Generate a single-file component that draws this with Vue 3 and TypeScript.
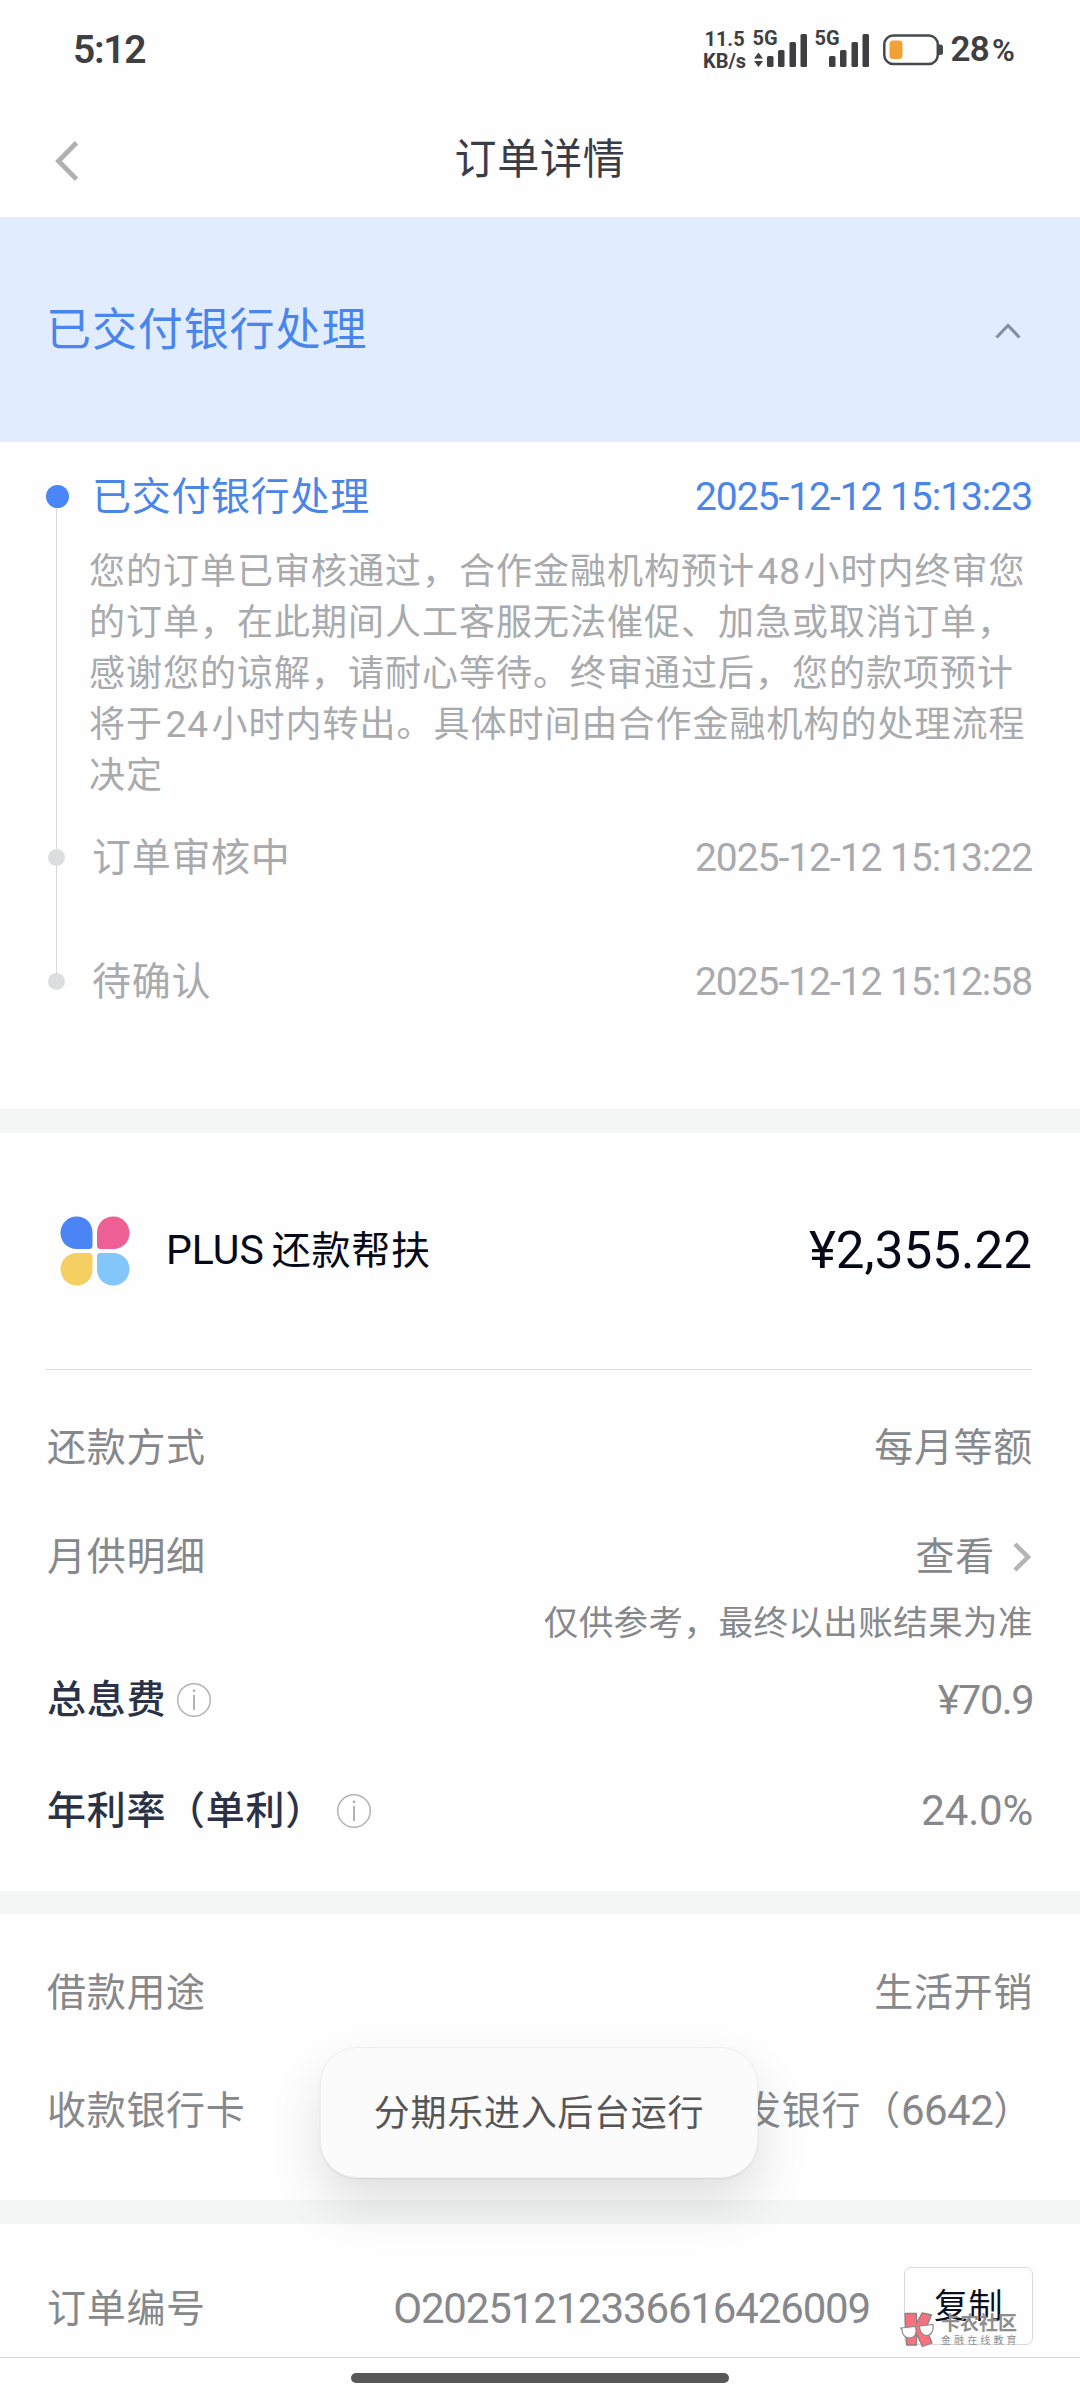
<script setup lang="ts">
interface Step {
  title: string
  time: string
  active?: boolean
  lines?: string[]
}

const steps: Step[] = [
  {
    title: '已交付银行处理',
    time: '2025-12-12 15:13:23',
    active: true,
    lines: [
      '您的订单已审核通过，合作金融机构预计48小时内终审您',
      '的订单，在此期间人工客服无法催促、加急或取消订单，',
      '感谢您的谅解，请耐心等待。终审通过后，您的款项预计',
      '将于24小时内转出。具体时间由合作金融机构的处理流程',
      '决定',
    ],
  },
  { title: '订单审核中', time: '2025-12-12 15:13:22' },
  { title: '待确认', time: '2025-12-12 15:12:58' },
]

// Digits inside running text get a little air on both sides.
const segments = (line: string): string[] => line.split(/(\d+)/).filter(Boolean)
const isDigits = (part: string): boolean => /^\d+$/.test(part)
</script>

<template>
  <div class="page">
    <header class="status">
      <span class="clock">5:12</span>
      <div class="indicators">
        <div class="speed"><span>11.5</span><span>KB/s</span></div>
        <div class="signal first">
          <span class="net">5G</span>
          <svg width="54" height="34" viewBox="0 0 54 34" fill="#3f3f41">
            <path d="M4.500 19.500l4.500 6H0zM4.500 34l4.500-6H0z" />
            <rect x="13" y="23" width="6.500" height="11" rx="1.500" />
            <rect x="24" y="17" width="6.500" height="17" rx="1.500" />
            <rect x="35.500" y="9" width="6.500" height="25" rx="1.500" />
            <rect x="46.500" y="1" width="6.500" height="33" rx="1.500" />
          </svg>
        </div>
        <div class="signal second">
          <span class="net">5G</span>
          <svg width="54" height="34" viewBox="0 0 54 34" fill="#3f3f41">
            <rect x="13" y="23" width="6.500" height="11" rx="1.500" />
            <rect x="24" y="17" width="6.500" height="17" rx="1.500" />
            <rect x="35.500" y="9" width="6.500" height="25" rx="1.500" />
            <rect x="46.500" y="1" width="6.500" height="33" rx="1.500" />
          </svg>
        </div>
        <svg class="battery" width="61" height="32" viewBox="0 0 61 32">
          <rect x="1.300" y="1.500" width="53.500" height="28.500" rx="9" fill="none" stroke="#45494d" stroke-width="2.500" />
          <path d="M56 10.500h1.500a2.500 2.500 0 0 1 2.500 2.500v5.500a2.500 2.500 0 0 1-2.500 2.500H56z" fill="#45494d" />
          <rect x="6.500" y="6.500" width="13" height="18.500" rx="3.500" fill="#f0a236" />
        </svg>
        <span class="level">28<small>%</small></span>
      </div>
    </header>

    <nav class="nav">
      <svg class="back" width="24" height="40" viewBox="0 0 24 40">
        <path d="M21.500 1.800L3.500 20l18 18.200" fill="none" stroke="#b0b0b0" stroke-width="4.800" />
      </svg>
      <h1>订单详情</h1>
    </nav>

    <section class="banner">
      <h2>已交付银行处理</h2>
      <svg width="26" height="16" viewBox="0 0 26 16">
        <path d="M1.500 14.500L13 2.500l11.500 12" fill="none" stroke="#8290a5" stroke-width="3.200" />
      </svg>
    </section>

    <ol class="timeline">
      <li v-for="step in steps" :key="step.time" :class="{ active: step.active }">
        <i class="dot"></i>
        <div class="content">
          <div class="head">
            <span class="name">{{ step.title }}</span>
            <time>{{ step.time }}</time>
          </div>
          <p v-if="step.lines" class="desc">
            <span v-for="line in step.lines" :key="line" class="line"><span
              v-for="part in segments(line)"
              :key="part"
              :class="{ digits: isDigits(part) }"
            >{{ part }}</span></span>
          </p>
        </div>
      </li>
    </ol>

    <section class="card">
      <div class="product">
        <svg width="70" height="70" viewBox="0 0 70 70">
          <path d="M16.500 0.500C26 0.500 32.500 7 32.500 17v12.500a3.500 3.500 0 0 1-3.500 3.500H17C7.500 33 .5 26 .5 17S7.500.5 16.500.5z" fill="#4b84f5" />
          <path d="M53.500 .5C44 .5 37 7 37 17v12.500a3.500 3.500 0 0 0 3.500 3.500H53C62.500 33 69.500 26 69.500 17S62.500.5 53.500.5z" fill="#ee5f96" />
          <path d="M16.500 69.500C26 69.500 32.500 63 32.500 53V40.500a3.500 3.500 0 0 0-3.500-3.500H17C7.500 37 .5 44 .5 53s7 16.500 16 16.500z" fill="#f6cf63" />
          <path d="M53.500 69.500C44 69.500 37 63 37 53V40.500a3.500 3.500 0 0 1 3.500-3.500H53c9.500 0 16.500 7 16.500 16s-7 16.500-16 16.500z" fill="#82c6fa" />
        </svg>
        <span class="product-name"><span class="latin">PLUS</span>还款帮扶</span>
        <strong>¥2,355.22</strong>
      </div>
      <div class="rows">
        <div class="row r-method"><span>还款方式</span><span>每月等额</span></div>
        <div class="row r-monthly">
          <span>月供明细</span>
          <span class="link">查看
            <svg width="18" height="30" viewBox="0 0 18 30">
              <path d="M2 2l13 13L2 28" fill="none" stroke="#b4b4b6" stroke-width="4.500" />
            </svg>
          </span>
        </div>
        <p class="note">仅供参考，最终以出账结果为准</p>
        <div class="row r-fee">
          <span class="key">总息费
            <svg class="info" width="36" height="36" viewBox="0 0 36 36">
              <circle cx="18" cy="18" r="16.300" fill="none" stroke="#b2b2b4" stroke-width="1.500" />
              <circle cx="18" cy="8.800" r="1.400" fill="#b2b2b4" />
              <path d="M18 13v15" stroke="#b2b2b4" stroke-width="2" />
            </svg>
          </span>
          <span class="num fee">¥70.9</span>
        </div>
        <div class="row r-rate">
          <span class="key rate">年利率（单利）
            <svg class="info" width="36" height="36" viewBox="0 0 36 36">
              <circle cx="18" cy="18" r="16.300" fill="none" stroke="#b2b2b4" stroke-width="1.500" />
              <circle cx="18" cy="8.800" r="1.400" fill="#b2b2b4" />
              <path d="M18 13v15" stroke="#b2b2b4" stroke-width="2" />
            </svg>
          </span>
          <span class="num percent">24.0%</span>
        </div>
      </div>
    </section>

    <section class="usage">
      <div class="row"><span>借款用途</span><span>生活开销</span></div>
      <div class="row"><span>收款银行卡</span><span class="bank">广发银行（<span class="num">6642</span>）</span></div>
    </section>

    <section class="order">
      <span class="label">订单编号</span>
      <span class="order-no">O20251212336616426009</span>
      <button type="button">复制</button>
    </section>

    <footer class="gesture"><i></i></footer>

    <div class="toast">分期乐进入后台运行</div>

    <div class="watermark">
      <svg width="35" height="36" viewBox="0 0 35 36">
        <path d="M5 1.500h11.500v10L22 1l9.500 2-5.500 13 6 15-9.500 3.500-6-12.500v11H6.500z" fill="#f7727f" stroke="#8d7f80" stroke-width="1.300" stroke-linejoin="round" />
        <path d="M1 16l14.500-1.500c2 8-1.500 11.500-6 11.500C4.500 26 2 22 2 17.500L.5 16zM19.500 14L33 12.500c.8 7-2 11-6.500 11-4 0-7-4-7-9.500zM15.500 16q2-2 4-.5" fill="#fff" stroke="#8c8c8c" stroke-width="1.200" />
      </svg>
      <div class="mark-text"><b>卡农社区</b><span>金融在线教育</span></div>
    </div>
  </div>
</template>

<style>
body {
  margin: 0;
  background: #fefefe;
}
</style>

<style scoped>
.page {
  position: relative;
  width: 1080px;
  height: 2400px;
  overflow: hidden;
  background: #fefefe;
  color: #87888b;
  font-family: Roboto, "Noto Sans CJK SC", sans-serif;
  font-size: 39px;
  line-height: 1.2;
  letter-spacing: 0.7px;
  white-space: nowrap;
}
h1, h2, p, ol {
  margin: 0;
  padding: 0;
  font-weight: 400;
}
svg {
  display: block;
  flex: none;
}

.status {
  height: 103px;
  box-sizing: border-box;
  padding: 0 66px 3px 73px;
  display: flex;
  align-items: center;
  justify-content: space-between;
  color: #3f3f41;
  letter-spacing: 0;
}
.clock {
  font-size: 39px;
  font-weight: 600;
  letter-spacing: -1.3px;
}
.indicators {
  display: flex;
  align-items: center;
}
.speed {
  display: flex;
  flex-direction: column;
  align-items: center;
  font-size: 20px;
  line-height: 22px;
  font-weight: 700;
  width: 44px;
  margin-right: 7px;
}
.signal {
  position: relative;
  width: 54px;
}
.signal.second {
  margin-left: 8px;
}
.net {
  position: absolute;
  left: -1px;
  top: -5px;
  font-size: 20px;
  line-height: 20px;
  font-weight: 700;
}
.battery {
  margin-left: 13px;
}
.level {
  margin-left: 7px;
  font-size: 35px;
  font-weight: 600;
  letter-spacing: -0.8px;
}
.level small {
  font-size: 31px;
  margin-left: 3px;
}

.nav {
  height: 114px;
  display: flex;
  align-items: center;
  justify-content: center;
  position: relative;
}
.back {
  position: absolute;
  left: 55px;
  top: 38px;
}
h1 {
  font-size: 42px;
  letter-spacing: 0.8px;
  color: #3a3d46;
}

.banner {
  height: 225px;
  box-sizing: border-box;
  padding: 3px 59px 0 46px;
  display: flex;
  align-items: center;
  justify-content: space-between;
  background: #e1edfe;
}
h2 {
  font-size: 45px;
  letter-spacing: 0.9px;
  color: #4a85ee;
}

.timeline {
  list-style: none;
  height: 639px;
  padding: 28px 48px 0 46px;
  border-bottom: 24px solid #f4f6f6;
}
.timeline li {
  position: relative;
  display: flex;
  margin-bottom: 70px;
}
.timeline li.active {
  margin-bottom: 29px;
}
.timeline li:not(:last-child)::before {
  content: "";
  position: absolute;
  left: 10px;
  top: 27px;
  bottom: -100px;
  width: 1px;
  background: #d9dadc;
}
.timeline li.active::before {
  bottom: -50px;
}
.dot {
  position: relative;
  flex: none;
  width: 17px;
  height: 17px;
  margin: 18px 27px 0 2px;
  border-radius: 50%;
  background: #dcdde0;
}
.active .dot {
  width: 23px;
  height: 23px;
  margin: 15px 23px 0 0;
  background: #4b86f8;
}
.content {
  flex: 1;
  color: #a9aaad;
}
.head {
  height: 54px;
  display: flex;
  align-items: center;
  justify-content: space-between;
}
.active .head {
  color: #4a85ea;
}
time {
  letter-spacing: -1.05px;
}
.desc {
  margin: 23px 0 0 -3px;
  font-size: 36px;
  letter-spacing: 1px;
  line-height: 51px;
}
.line {
  display: block;
}
.digits {
  font-size: 37px;
  line-height: 1;
  margin: 0 2.500px;
}

.card {
  border-bottom: 23px solid #f4f6f6;
}
.product {
  height: 236px;
  margin: 0 48px 0 46px;
  padding-left: 14px;
  border-bottom: 1px solid #dadbdc;
  display: flex;
  align-items: center;
  color: #060a18;
}
.product-name {
  margin-left: 36px;
}
.product-name .latin {
  font-size: 41px;
  margin-right: 8px;
  letter-spacing: 0;
}
.product strong {
  margin-left: auto;
  font-size: 51.200px;
  font-weight: 400;
  letter-spacing: 0;
}
.rows {
  height: 521px;
  padding: 0 47px 0 47px;
  display: flow-root;
}
.row {
  height: 54px;
  display: flex;
  align-items: center;
  justify-content: space-between;
}
.r-method {
  margin-top: 51px;
}
.r-monthly {
  margin-top: 55px;
}
.link {
  display: flex;
  align-items: center;
  gap: 18px;
  margin-right: 2px;
}
.note {
  margin-top: 14px;
  height: 50px;
  line-height: 50px;
  text-align: right;
  font-size: 34.500px;
  letter-spacing: 0.450px;
}
.r-fee {
  margin-top: 25px;
}
.r-rate {
  margin-top: 57px;
}
.key {
  display: flex;
  align-items: center;
  gap: 10px;
  font-weight: 500;
  color: #2b3246;
}
.rate {
  gap: 11px;
}
.num {
  font-size: 42px;
  letter-spacing: -0.500px;
}
.fee {
  font-size: 41.500px;
  letter-spacing: -1.500px;
}
.percent {
  letter-spacing: -0.200px;
}

.usage {
  height: 286px;
  box-sizing: border-box;
  padding: 52px 47px 0;
}
.usage .row + .row {
  margin-top: 64px;
}
.bank {
  display: flex;
  align-items: center;
}

.order {
  height: 157px;
  box-sizing: border-box;
  border-top: 24px solid #f4f6f6;
  padding: 37px 47px 0 47px;
  display: flex;
  align-items: center;
}
.order-no {
  margin-left: auto;
  margin-right: 34px;
  font-size: 42px;
  letter-spacing: -1.150px;
}
button {
  width: 129px;
  height: 78px;
  margin-top: -6px;
  padding: 0;
  border: 1.500px solid #d8d9da;
  border-radius: 7px;
  background: transparent;
  font: inherit;
  font-size: 34px;
  letter-spacing: 0.500px;
  color: #0b0f1c;
}

.gesture {
  height: 43px;
  box-sizing: border-box;
  border-top: 1px solid #d9d9d9;
  padding-top: 15px;
}
.gesture i {
  display: block;
  width: 378px;
  height: 10px;
  margin: 0 auto;
  border-radius: 5px;
  background: #585858;
}

.toast {
  position: absolute;
  left: 320px;
  top: 2047px;
  width: 436px;
  height: 129px;
  line-height: 132px;
  text-align: center;
  border: 1px solid #efefef;
  border-radius: 37px;
  background: #fbfbfb;
  box-shadow: 0 26px 52px rgba(0, 0, 0, 0.12), 0 1px 2px rgba(0, 0, 0, 0.08);
  color: #565656;
  font-size: 36px;
}

.watermark {
  position: absolute;
  left: 900px;
  top: 2312px;
  display: flex;
  align-items: center;
  color: #8e8e8e;
}
.mark-text {
  display: flex;
  flex-direction: column;
  margin-left: 6px;
}
.mark-text b {
  font-size: 19px;
  line-height: 21px;
  letter-spacing: 0;
}
.mark-text span {
  font-size: 10px;
  line-height: 13px;
  letter-spacing: 3.100px;
}
</style>
